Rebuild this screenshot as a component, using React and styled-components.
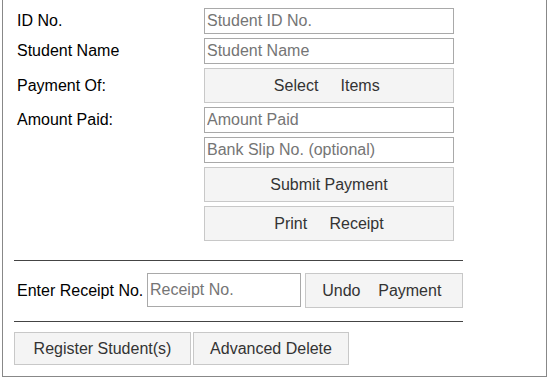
import React from "react";
import styled, { createGlobalStyle } from "styled-components";

const GlobalStyle = createGlobalStyle`
  html, body {
    margin: 0;
    padding: 0;
    background: #ffffff;
    font-family: "Liberation Sans", Arial, sans-serif;
    font-size: 16px;
    color: #000;
  }
  * { box-sizing: border-box; }
`;

const Panel = styled.div`
  margin: -1px 0 0 2px;
  width: 545px;
  height: 378px;
  border: 1px solid #888;
  padding: 8px 0 0 11px;
  display: flex;
  flex-direction: column;
`;

const FormGrid = styled.div`
  display: grid;
  grid-template-columns: 190px 250px;
  grid-auto-rows: auto;
  row-gap: 4px;
  align-items: center;
`;

const Label = styled.div`
  padding-left: 3px;
  line-height: 18px;
  white-space: nowrap;
`;

const Input = styled.input`
  width: ${(p) => p.$w || "100%"};
  height: ${(p) => p.$h || 26}px;
  border: 1px solid #a9a9a9;
  padding: 0 2px;
  font-family: "Liberation Sans", Arial, sans-serif;
  font-size: 16px;
  color: #000;
  background: #fff;
  outline: none;
  &::placeholder {
    color: #757575;
    opacity: 1;
  }
`;

const Button = styled.button`
  width: ${(p) => p.$w || "100%"};
  height: ${(p) => p.$h || 35}px;
  padding: 0;
  border: 1px solid #c8c8c8;
  background: #f4f4f4;
  color: #333;
  font-family: "Liberation Sans", Arial, sans-serif;
  font-size: 16px;
  white-space: pre;
  cursor: pointer;
`;

const Rule = styled.hr`
  width: 449px;
  margin: ${(p) => p.$mt}px 0 0 0;
  border: none;
  border-top: 1px solid #444;
  height: 0;
`;

const ReceiptRow = styled.div`
  display: flex;
  align-items: center;
  margin-top: 12px;
`;

const ReceiptLabel = styled.div`
  width: 133px;
  padding-left: 3px;
  white-space: nowrap;
`;

const ButtonRow = styled.div`
  display: flex;
  gap: ${(p) => p.$gap || 3}px;
  margin-top: ${(p) => p.$mt || 0}px;
`;

export default function App() {
  return (
    <>
      <GlobalStyle />
      <Panel>
        <FormGrid>
          <Label>ID No.</Label>
          <Input placeholder="Student ID No." />
          <Label>Student Name</Label>
          <Input placeholder="Student Name" />
          <Label>Payment Of:</Label>
          <Button>{"Select     Items "}</Button>
          <Label>Amount Paid:</Label>
          <Input placeholder="Amount Paid" />
          <span />
          <Input placeholder="Bank Slip No. (optional)" />
          <span />
          <Button>Submit Payment</Button>
          <span />
          <Button>{"Print     Receipt"}</Button>
        </FormGrid>
        <Rule $mt={19} />
        <ReceiptRow>
          <ReceiptLabel>Enter Receipt No.</ReceiptLabel>
          <ButtonRow $gap={4}>
            <Input $w="154px" $h={34} placeholder="Receipt No." />
            <Button $w="158px" $h={35}>{"Undo    Payment "}</Button>
          </ButtonRow>
        </ReceiptRow>
        <Rule $mt={13} />
        <ButtonRow $gap={2} $mt={10}>
          <Button $w="177px" $h={33}>Register Student(s)</Button>
          <Button $w="156px" $h={33}>Advanced Delete</Button>
        </ButtonRow>
      </Panel>
    </>
  );
}
